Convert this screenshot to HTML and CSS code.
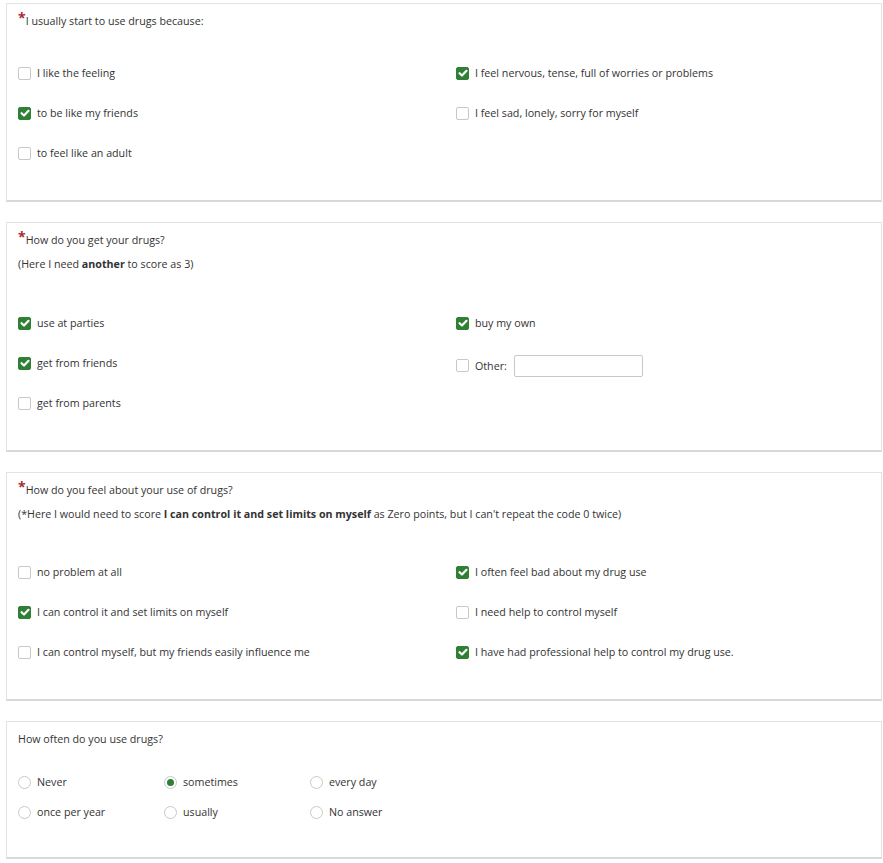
FILE: index.html
```html
<!DOCTYPE html>
<html>
<head>
<meta charset="utf-8">
<link rel="stylesheet" href="styles.css">
</head>
<body>
<div class="page">

  <div class="panel">
    <div class="title"><span class="req">*</span>I usually start to use drugs because:</div>
    <div class="answers answers-first">
      <div class="col">
        <div class="opt"><span class="cb"></span><span class="lbl">I like the feeling</span></div>
        <div class="opt"><span class="cb on"><svg viewBox="0 0 14 14" width="14" height="14"><path d="M3.6 7.2 L6 9.5 L10.5 4.8" fill="none" stroke="#fff" stroke-width="2.2" stroke-linecap="round" stroke-linejoin="round"/></svg></span><span class="lbl">to be like my friends</span></div>
        <div class="opt"><span class="cb"></span><span class="lbl">to feel like an adult</span></div>
      </div>
      <div class="col">
        <div class="opt"><span class="cb on"><svg viewBox="0 0 14 14" width="14" height="14"><path d="M3.6 7.2 L6 9.5 L10.5 4.8" fill="none" stroke="#fff" stroke-width="2.2" stroke-linecap="round" stroke-linejoin="round"/></svg></span><span class="lbl">I feel nervous, tense, full of worries or problems</span></div>
        <div class="opt"><span class="cb"></span><span class="lbl">I feel sad, lonely, sorry for myself</span></div>
      </div>
    </div>
  </div>

  <div class="panel">
    <div class="title"><span class="req">*</span>How do you get your drugs?</div>
    <div class="help">(Here I need <b>another</b> to score as 3)</div>
    <div class="answers">
      <div class="col">
        <div class="opt"><span class="cb on"><svg viewBox="0 0 14 14" width="14" height="14"><path d="M3.6 7.2 L6 9.5 L10.5 4.8" fill="none" stroke="#fff" stroke-width="2.2" stroke-linecap="round" stroke-linejoin="round"/></svg></span><span class="lbl">use at parties</span></div>
        <div class="opt"><span class="cb on"><svg viewBox="0 0 14 14" width="14" height="14"><path d="M3.6 7.2 L6 9.5 L10.5 4.8" fill="none" stroke="#fff" stroke-width="2.2" stroke-linecap="round" stroke-linejoin="round"/></svg></span><span class="lbl">get from friends</span></div>
        <div class="opt"><span class="cb"></span><span class="lbl">get from parents</span></div>
      </div>
      <div class="col">
        <div class="opt"><span class="cb on"><svg viewBox="0 0 14 14" width="14" height="14"><path d="M3.6 7.2 L6 9.5 L10.5 4.8" fill="none" stroke="#fff" stroke-width="2.2" stroke-linecap="round" stroke-linejoin="round"/></svg></span><span class="lbl">buy my own</span></div>
        <div class="opt opt-other"><span class="cb"></span><span class="lbl">Other:</span><span class="other"></span></div>
      </div>
    </div>
  </div>

  <div class="panel">
    <div class="title"><span class="req">*</span>How do you feel about your use of drugs?</div>
    <div class="help">(*Here I would need to score <b>I can control it and set limits on myself</b> as Zero points, but I can't repeat the code 0 twice)</div>
    <div class="answers answers-tight">
      <div class="col">
        <div class="opt"><span class="cb"></span><span class="lbl">no problem at all</span></div>
        <div class="opt"><span class="cb on"><svg viewBox="0 0 14 14" width="14" height="14"><path d="M3.6 7.2 L6 9.5 L10.5 4.8" fill="none" stroke="#fff" stroke-width="2.2" stroke-linecap="round" stroke-linejoin="round"/></svg></span><span class="lbl">I can control it and set limits on myself</span></div>
        <div class="opt"><span class="cb"></span><span class="lbl">I can control myself, but my friends easily influence me</span></div>
      </div>
      <div class="col">
        <div class="opt"><span class="cb on"><svg viewBox="0 0 14 14" width="14" height="14"><path d="M3.6 7.2 L6 9.5 L10.5 4.8" fill="none" stroke="#fff" stroke-width="2.2" stroke-linecap="round" stroke-linejoin="round"/></svg></span><span class="lbl">I often feel bad about my drug use</span></div>
        <div class="opt"><span class="cb"></span><span class="lbl">I need help to control myself</span></div>
        <div class="opt"><span class="cb on"><svg viewBox="0 0 14 14" width="14" height="14"><path d="M3.6 7.2 L6 9.5 L10.5 4.8" fill="none" stroke="#fff" stroke-width="2.2" stroke-linecap="round" stroke-linejoin="round"/></svg></span><span class="lbl">I have had professional help to control my drug use.</span></div>
      </div>
    </div>
  </div>

  <div class="panel">
    <div class="title">How often do you use drugs?</div>
    <div class="radios">
      <div class="ropt"><span class="rd"></span><span class="lbl">Never</span></div>
      <div class="ropt"><span class="rd on"></span><span class="lbl">sometimes</span></div>
      <div class="ropt"><span class="rd"></span><span class="lbl">every day</span></div>
      <div class="ropt"><span class="rd"></span><span class="lbl">once per year</span></div>
      <div class="ropt"><span class="rd"></span><span class="lbl">usually</span></div>
      <div class="ropt"><span class="rd"></span><span class="lbl">No answer</span></div>
    </div>
  </div>

</div>
</body>
</html>
```
FILE: styles.css
```css
* { box-sizing: border-box; }
html, body { margin: 0; padding: 0; background: #fff; }
body {
  font-family: "Open Sans", "Noto Sans", sans-serif;
  font-size: 10.7px;
  color: #333;
}
.page {
  padding: 3px 1px 0 6px;
}
.panel {
  border: 1px solid #e3e3e3;
  border-bottom: 2px solid #d8d8d8;
  margin-bottom: 20px;
  padding: 7px 0 27px 0;
}
.title {
  line-height: 20px;
  padding-left: 11px;
}
.req {
  color: #a62c2c;
  font-weight: bold;
  font-size: 14px;
  position: relative;
  top: -2px;
  line-height: 0;
}
.help {
  line-height: 20px;
  margin-top: 4px;
  padding-left: 11px;
}
.help b { font-weight: 700; }
.answers {
  display: grid;
  grid-template-columns: 1fr 1fr;
  margin-top: 29px;
}
.answers-first { margin-top: 22px; }
.answers-tight { margin-top: 28px; }
.col { padding-left: 11px; }
.col + .col { padding-left: 12px; }
.opt {
  height: 40px;
  display: flex;
  align-items: center;
}
.opt-other { padding-top: 5px; }
.cb {
  width: 13px;
  height: 13px;
  border: 1px solid #c8c8c8;
  border-radius: 2px;
  background: #fff;
  flex: none;
  margin-right: 6px;
  display: flex;
  align-items: center;
  justify-content: center;
  overflow: hidden;
}
.cb.on {
  background: #2f7f34;
  border-color: #2f7f34;
}
.cb svg { display: block; flex: none; }
.other {
  display: inline-block;
  width: 129px;
  height: 22px;
  border: 1px solid #c8c8c8;
  border-radius: 2px;
  margin-left: 7px;
}
.radios {
  display: grid;
  grid-template-columns: 146px 146px 146px;
  margin-top: 18px;
  padding-left: 11px;
  padding-bottom: 3px;
}
.ropt {
  height: 30px;
  display: flex;
  align-items: center;
}
.rd {
  width: 13px;
  height: 13px;
  border: 1px solid #c8c8c8;
  border-radius: 50%;
  background: #fff;
  flex: none;
  margin-right: 6px;
  display: flex;
  align-items: center;
  justify-content: center;
}
.rd.on::after {
  content: "";
  width: 7px;
  height: 7px;
  border-radius: 50%;
  background: #2f7f34;
}
```
